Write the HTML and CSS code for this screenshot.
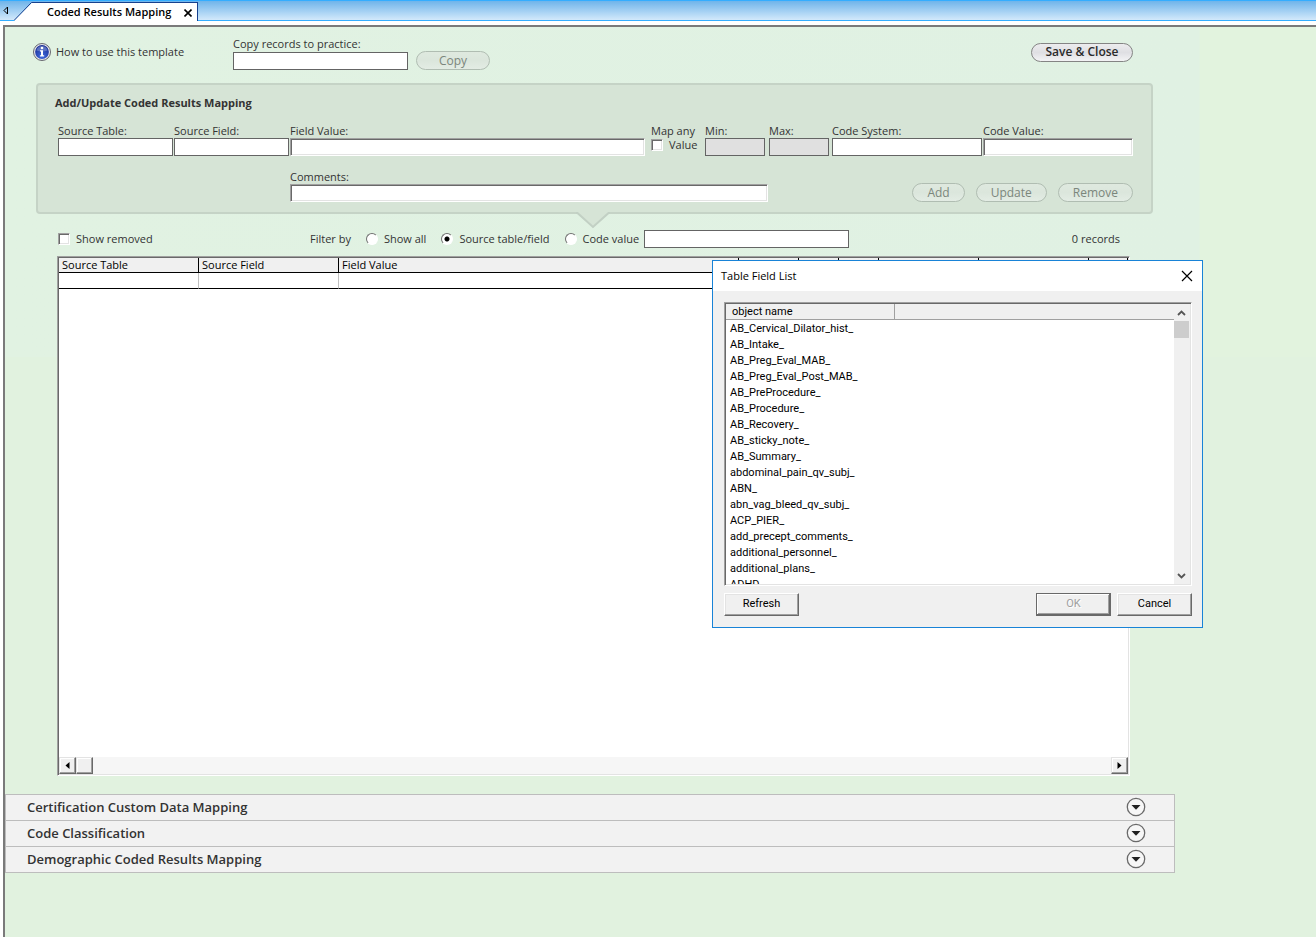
FILE: index.html
```html
<!DOCTYPE html>
<html lang="en">
<head>
<meta charset="utf-8">
<title>Coded Results Mapping</title>
<meta name="viewport" content="width=device-width, initial-scale=1">
<link rel="stylesheet" href="styles.css">
</head>
<body>
<svg class="defs" width="0" height="0" aria-hidden="true">
  <defs>
    <radialGradient id="info-fill" cx="50%" cy="80%" r="75%">
      <stop offset="0" stop-color="#3f6be0"/>
      <stop offset="1" stop-color="#1c2f94"/>
    </radialGradient>
    <symbol id="chevron" viewBox="0 0 20 20">
      <circle cx="10" cy="10" r="8.7" fill="#f7f7f7" stroke="#6a6a6a" stroke-width="1.3"/>
      <path d="M5.500 8h9L10 12.800z" fill="#222"/>
    </symbol>
  </defs>
</svg>

<header class="tabbar">
  <button class="tab-scroll" type="button" aria-label="Previous tab">
    <svg width="6" height="9" viewBox="0 0 6 9"><path d="M4.500 1v7L1 4.500z" fill="none" stroke="#000"/></svg>
  </button>
  <div class="tab">
    <svg class="tab-slope" width="19" height="19" viewBox="0 0 19 19"><path d="M0 19 18 .5h1V19z" fill="#fff"/><path d="M0 18.500 17.500.5H19" fill="none" stroke="#16418f"/></svg>
    <span class="tab-body">
      <span class="tab-title">Coded Results Mapping</span>
      <button class="tab-close" type="button" aria-label="Close tab">
        <svg width="8" height="8" viewBox="0 0 8 8"><path d="M.5.5l7 7M7.500.5l-7 7" stroke="#000" stroke-width="1.600"/></svg>
      </button>
    </span>
  </div>
</header>

<main class="workspace">
  <div class="content">
    <div class="toolbar">
      <a class="help" href="#help">
        <svg width="18" height="18" viewBox="0 0 18 18">
          <circle cx="9" cy="9" r="8.500" fill="#e8e8ee" stroke="#66666e"/>
          <circle cx="9" cy="9" r="6.900" fill="url(#info-fill)"/>
          <path d="M3.500 7.500a5.600 5.600 0 0 1 11 0Q9 9.500 3.500 7.500z" fill="#8fa2dc" opacity=".5"/>
          <circle cx="9" cy="5" r="1.300" fill="#fff"/>
          <path d="M7 7.300h3v4.900h1.200v1.200H6.900v-1.200H8V8.500H7z" fill="#fff"/>
        </svg>
        How to use this template
      </a>
      <div class="field copy-field">
        <label for="practice">Copy records to practice:</label>
        <input id="practice" class="box" type="text">
      </div>
      <button class="pill copy" type="button" disabled>Copy</button>
      <button class="pill save" type="button">Save &amp; Close</button>
    </div>

    <section class="panel">
      <h2>Add/Update Coded Results Mapping</h2>
      <div class="fields">
        <div class="field"><label for="st">Source Table:</label><input id="st" class="box" type="text"></div>
        <div class="field"><label for="sf">Source Field:</label><input id="sf" class="box" type="text"></div>
        <div class="field"><label for="fv">Field Value:</label><input id="fv" class="box sunken" type="text"></div>
        <div class="map-any">
          <label for="any">Map any</label>
          <label class="check"><input id="any" type="checkbox">Value</label>
        </div>
        <div class="field range"><label for="min">Min:</label><input id="min" class="box" type="text" disabled></div>
        <div class="field range"><label for="max">Max:</label><input id="max" class="box" type="text" disabled></div>
        <div class="field"><label for="cs">Code System:</label><input id="cs" class="box" type="text"></div>
        <div class="field"><label for="cv">Code Value:</label><input id="cv" class="box sunken" type="text"></div>
        <div class="field comments"><label for="cm">Comments:</label><input id="cm" class="box sunken" type="text"></div>
        <div class="actions">
          <button class="pill" type="button" disabled>Add</button>
          <button class="pill" type="button" disabled>Update</button>
          <button class="pill" type="button" disabled>Remove</button>
        </div>
      </div>
      <svg class="notch" width="34" height="17" viewBox="0 0 34 17"><path d="M0 0h34v1L17 15.500 0 1z" fill="#d6e4d6"/><path d="M0 1h1.500L17 15 32.500 1H34" fill="none" stroke="#c2d0c4" stroke-width="2"/></svg>
    </section>

    <div class="filters">
      <label class="check removed"><input type="checkbox">Show removed</label>
      <span>Filter by</span>
      <label class="check"><input type="radio" name="filter">Show all</label>
      <label class="check"><input type="radio" name="filter" checked>Source table/field</label>
      <label class="check"><input type="radio" name="filter">Code value</label>
      <input class="box filter-value" type="text" aria-label="Filter value">
      <span class="count">0 records</span>
    </div>

    <div class="grid-box">
      <div class="grid-view">
        <table class="grid">
          <colgroup><col class="c140"><col class="c140"><col class="c400"><col class="c60"><col class="c40"><col class="c40"><col class="c100"><col class="c110"><col></colgroup>
          <thead><tr><th>Source Table</th><th>Source Field</th><th>Field Value</th><th></th><th></th><th></th><th></th><th></th><th></th></tr></thead>
          <tbody><tr><td></td><td></td><td></td><td></td><td></td><td></td><td></td><td></td><td></td></tr></tbody>
        </table>
      </div>
      <div class="hscroll">
        <button type="button" aria-label="Scroll left"><svg width="5" height="7" viewBox="0 0 5 7"><path d="M4.500 0v7L.5 3.500z"/></svg></button>
        <span class="thumb"></span>
        <button class="right" type="button" aria-label="Scroll right"><svg width="5" height="7" viewBox="0 0 5 7"><path d="M.5 0v7l4-3.500z"/></svg></button>
      </div>
    </div>
  </div>

  <div class="accordion">
    <button type="button">Certification Custom Data Mapping<svg width="20" height="20"><use href="#chevron"/></svg></button>
    <button type="button">Code Classification<svg width="20" height="20"><use href="#chevron"/></svg></button>
    <button type="button">Demographic Coded Results Mapping<svg width="20" height="20"><use href="#chevron"/></svg></button>
  </div>
</main>

<div class="dialog" role="dialog" aria-labelledby="dlg-title">
  <div class="dialog-bar">
    <span id="dlg-title">Table Field List</span>
    <button class="dialog-close" type="button" aria-label="Close">
      <svg width="12" height="12" viewBox="0 0 12 12"><path d="M1 1l10 10M11 1 1 11" stroke="#000" stroke-width="1.200"/></svg>
    </button>
  </div>
  <div class="dialog-body">
    <div class="list">
      <div class="list-view">
        <table class="list-table">
          <colgroup><col class="name-col"><col></colgroup>
          <thead><tr><th>object name</th><th></th></tr></thead>
          <tbody>
            <tr><td colspan="2">AB_Cervical_Dilator_hist_</td></tr>
            <tr><td colspan="2">AB_Intake_</td></tr>
            <tr><td colspan="2">AB_Preg_Eval_MAB_</td></tr>
            <tr><td colspan="2">AB_Preg_Eval_Post_MAB_</td></tr>
            <tr><td colspan="2">AB_PreProcedure_</td></tr>
            <tr><td colspan="2">AB_Procedure_</td></tr>
            <tr><td colspan="2">AB_Recovery_</td></tr>
            <tr><td colspan="2">AB_sticky_note_</td></tr>
            <tr><td colspan="2">AB_Summary_</td></tr>
            <tr><td colspan="2">abdominal_pain_qv_subj_</td></tr>
            <tr><td colspan="2">ABN_</td></tr>
            <tr><td colspan="2">abn_vag_bleed_qv_subj_</td></tr>
            <tr><td colspan="2">ACP_PIER_</td></tr>
            <tr><td colspan="2">add_precept_comments_</td></tr>
            <tr><td colspan="2">additional_personnel_</td></tr>
            <tr><td colspan="2">additional_plans_</td></tr>
            <tr><td colspan="2">ADHD_</td></tr>
          </tbody>
        </table>
      </div>
      <div class="vscroll">
        <button type="button" aria-label="Scroll up"><svg width="9" height="6" viewBox="0 0 9 6"><path d="M1 5l3.500-3.500L8 5" fill="none" stroke="#555" stroke-width="1.800"/></svg></button>
        <span class="vthumb"></span>
        <button class="down" type="button" aria-label="Scroll down"><svg width="9" height="6" viewBox="0 0 9 6"><path d="M1 1l3.500 3.500L8 1" fill="none" stroke="#555" stroke-width="1.800"/></svg></button>
      </div>
    </div>
    <div class="dialog-actions">
      <button class="classic" type="button">Refresh</button>
      <button class="classic ok" type="button" disabled>OK</button>
      <button class="classic" type="button">Cancel</button>
    </div>
  </div>
</div>
</body>
</html>
```
FILE: styles.css
```css
* { box-sizing: border-box; }
body {
  margin: 0;
  min-height: 100vh;
  display: flex;
  flex-direction: column;
  background: #fff;
  color: #333;
  font: 11px/14px "Open Sans", "Noto Sans", sans-serif;
}
button, input { font: inherit; color: inherit; margin: 0; }
button { padding: 0; border: 0; background: none; }
svg { display: block; flex: none; }
.defs { position: absolute; }

/* Tab bar */
.tabbar {
  display: flex;
  align-items: flex-end;
  height: 21px;
  border-top: 1px solid #33adff;
  border-bottom: 1px solid #33adff;
  background: linear-gradient(#6fb4ea, #d3e9fb);
}
.tab-scroll { width: 14px; height: 17px; padding-left: 3px; align-self: center; display: flex; align-items: center; }
.tab { display: flex; height: 19px; margin-bottom: -1px; }
.tab-body {
  display: flex;
  align-items: center;
  gap: 13px;
  padding: 0 5px 0 14px;
  background: #fff;
  border-top: 1px solid #16418f;
  border-right: 1px solid #16418f;
  color: #000;
}
.tab-title { font-weight: 600; white-space: nowrap; }
.tab-close { padding-top: 2px; }

/* Workspace */
.workspace {
  flex: 1;
  margin: 4px 0 0 3px;
  padding-bottom: 16px;
  border-left: 2px solid #7a7a7a;
  border-top: 2px solid #7a7a7a;
  background: linear-gradient(90deg, #e1f2e2 0, #e0f1e3 1194px, #e2f3de 1195px) top / 100% 330px no-repeat #e1f2df;
}
.content { max-width: 1148px; padding-left: 31px; }

.toolbar { display: flex; align-items: center; padding: 10px 20px 13px 0; }
.help, .save { margin-bottom: 3px; }
.help {
  display: flex;
  align-items: center;
  gap: 5px;
  width: 200px;
  margin-left: -3px;
  color: inherit;
  text-decoration: none;
}
.field { display: flex; flex-direction: column; white-space: nowrap; min-width: 0; }
.copy-field { width: 175px; }
.copy-field label { margin-bottom: 1px; }
.box {
  width: 100%;
  height: 18px;
  padding: 0 3px;
  border: 1px solid #646464;
  border-radius: 0;
  background: #fff;
}
.box:disabled { background: #e0e0e0; }
.sunken {
  border-color: #a0a0a0 #fff #fff #a0a0a0;
  box-shadow: inset 1px 1px #696969, inset -1px -1px #e3e3e3;
}
.pill {
  height: 19px;
  padding: 0 14px;
  border: 1px solid #848484;
  border-radius: 10px;
  background: linear-gradient(#ececee, #dfdfe3 50%, #f3f3f5);
  color: #2b2b2b;
  font-size: 12px;
  line-height: 16px;
  font-weight: 600;
  white-space: nowrap;
}
.pill:disabled {
  border-color: #b0bdb2;
  background: linear-gradient(#dfe9df, #dbe6dc 50%, #e3ece4);
  color: #7b867c;
  font-weight: 500;
}
.copy { width: 74px; margin-left: 8px; align-self: flex-end; }
.save { width: 102px; margin-left: auto; padding: 0; }

/* Edit panel */
.panel {
  position: relative;
  padding: 9px 18px 10px 20px;
  border: 2px solid #c5d3c6;
  border-radius: 4px;
  background: #d6e4d6;
}
.panel h2 { margin: 0 0 12px -3px; font-size: 11px; line-height: 18px; font-weight: 700; }
.fields {
  display: grid;
  grid-template-columns: 115px 115px 1fr 58px 63px 62px 150px 150px;
  column-gap: 1px;
  row-gap: 14px;
}
.map-any { display: flex; flex-direction: column; padding-left: 5px; white-space: nowrap; }
.range input { width: 60px; }
.comments { grid-column: 3 / 6; }
.actions { grid-column: 6 / 9; display: flex; justify-content: flex-end; align-items: flex-end; gap: 11px; }
.notch { position: absolute; left: 538px; top: 127px; }

.check { display: flex; align-items: center; gap: 6px; white-space: nowrap; }
.check input { appearance: none; width: 12px; height: 12px; flex: none; background: #fff; }
.check input[type="checkbox"] {
  border: 1px solid;
  border-color: #a0a0a0 #fff #fff #a0a0a0;
  box-shadow: inset 1px 1px #696969, inset -1px -1px #e3e3e3;
}
.check input[type="radio"] {
  border: 1px solid;
  border-color: #707070 #fff #fff #707070;
  border-radius: 50%;
}
.check input[type="radio"]:checked { background: radial-gradient(circle, #000 2px, #fff 3px); }

/* Filters */
.filters { display: flex; align-items: center; gap: 15px; padding: 16px 33px 8px 22px; white-space: nowrap; }
.removed { width: 237px; }
.filter-value { width: 205px; margin-left: -10px; }
.count { margin-left: auto; }

/* Results grid */
.grid-box {
  display: flex;
  flex-direction: column;
  height: 520px;
  margin: 0 23px 0 21px;
  border: 1px solid;
  border-color: #a0a0a0 #fff #fff #a0a0a0;
  box-shadow: inset 1px 1px #696969, inset -1px -1px #e3e3e3;
  padding: 1px;
  background: #fff;
}
.grid-view { flex: 1; overflow: hidden; }
.grid { width: 100%; table-layout: fixed; border-collapse: separate; border-spacing: 0; color: #000; }
.grid th {
  height: 15px;
  padding: 0 3px;
  background: #f0f0f0;
  border-right: 1px solid #000;
  border-bottom: 1px solid #000;
  font-weight: 400;
  text-align: left;
}
.grid td { height: 16px; padding: 0; border-right: 1px solid #c0c0c0; border-bottom: 1px solid #000; }
.c140 { width: 140px; }
.c400 { width: 400px; }
.c60 { width: 60px; }
.c40 { width: 40px; }
.c100 { width: 100px; }
.c110 { width: 110px; }
.hscroll { display: flex; height: 17px; background: #f6f6f6; }
.hscroll button, .thumb {
  width: 17px;
  display: flex;
  align-items: center;
  justify-content: center;
  background: #f0f0f0;
  border: 1px solid;
  border-color: #e3e3e3 #696969 #696969 #e3e3e3;
  box-shadow: inset -1px -1px #a0a0a0, inset 1px 1px #fff;
}
.hscroll .right { margin-left: auto; }

/* Collapsed sections */
.accordion { max-width: 1170px; margin-top: 18px; border: 1px solid #bdbdbd; border-top: 0; }
.accordion button {
  display: flex;
  align-items: center;
  justify-content: space-between;
  width: 100%;
  height: 26px;
  padding: 0 28px 1px 21px;
  border-top: 1px solid #bdbdbd;
  background: #f2f2f2;
  font-size: 13px;
  line-height: 18px;
  font-weight: 600;
}

/* Dialog window */
.dialog {
  position: absolute;
  left: 712px;
  top: 260px;
  width: 491px;
  border: 1px solid #1883d7;
  background: #f0f0f0;
  color: #000;
}
.dialog-bar {
  display: flex;
  align-items: center;
  justify-content: space-between;
  height: 30px;
  padding: 0 9px 1px 8px;
  background: #fff;
}
.dialog-body { padding: 11px 10px 11px 11px; font-family: Roboto, "Liberation Sans", sans-serif; }
.list {
  display: flex;
  height: 284px;
  padding: 1px;
  border: 1px solid;
  border-color: #a0a0a0 #fff #fff #a0a0a0;
  box-shadow: inset 1px 1px #696969, inset -1px -1px #e3e3e3;
}
.list-view { flex: 1; overflow: hidden; background: #fff; }
.list-table { width: 100%; table-layout: fixed; border-collapse: separate; border-spacing: 0; }
.name-col { width: 169px; }
.list-table th {
  height: 16px;
  padding: 1px 6px 0;
  background: #f0f0f0;
  border-right: 1px solid #a0a0a0;
  border-bottom: 1px solid #a0a0a0;
  font-weight: 400;
  text-align: left;
}
.list-table th:last-child { border-right: 0; }
.list-table td { height: 16px; padding: 2px 4px 0; }
.vscroll { display: flex; flex-direction: column; width: 16px; background: #f0f0f0; }
.vscroll button { height: 17px; display: flex; align-items: center; justify-content: center; padding-right: 2px; }
.vthumb { height: 17px; background: #cdcdcd; margin-right: 1px; }
.vscroll .down { margin-top: auto; }
.dialog-actions { display: flex; gap: 6px; margin-top: 7px; }
.classic {
  width: 75px;
  height: 23px;
  padding-bottom: 1px;
  border: 1px solid;
  border-color: #fff #696969 #696969 #fff;
  box-shadow: inset -1px -1px #a0a0a0, inset 1px 1px #e3e3e3;
  background: #f0f0f0;
}
.classic:disabled { color: #a0a0a0; text-shadow: 1px 1px #fff; }
.ok { margin-left: auto; border-color: #696969; box-shadow: inset -1px -1px #696969, inset 1px 1px #fff, inset -2px -2px #a0a0a0; }
```
